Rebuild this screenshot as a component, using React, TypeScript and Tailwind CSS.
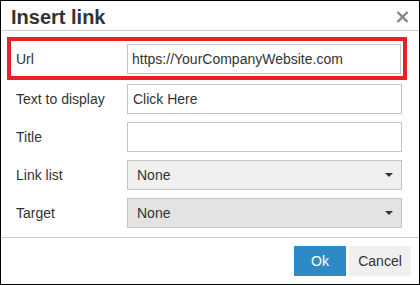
import React from "react";

const font = { fontFamily: '"Liberation Sans", Arial, sans-serif' };

function Arrow() {
  return (
    <svg width="8" height="4" viewBox="0 0 8 4" className="shrink-0">
      <path d="M0 0 L8 0 L4 4 Z" fill="#333333" />
    </svg>
  );
}

export default function App() {
  return (
    <div
      className="w-[420px] h-[285px] border border-black bg-white flex flex-col text-[#333333] overflow-hidden"
      style={font}
    >
      {/* Header */}
      <div className="h-[30px] shrink-0 border-b border-[#cccccc] flex items-center justify-between pl-[10px] pr-[10px]">
        <span className="text-[20px] font-bold leading-none pt-[2px] text-[#333333]">Insert link</span>
        <svg width="13" height="12" viewBox="0 0 13 12" className="mt-[2px]">
          <path d="M1.5 1 L11.5 11 M11.5 1 L1.5 11" stroke="#858585" strokeWidth="2.4" />
        </svg>
      </div>

      {/* Body */}
      <div className="flex-1 flex flex-col pl-[6px] pr-[12px] pt-[6px]">
        <div className="h-[43px] border-[4px] border-[#e8202a] flex items-center pl-[5px] pr-[2px] pt-[1px]">
          <span className="w-[111px] shrink-0 text-[14px]">Url</span>
          <div className="flex-1 h-[30px] border border-[#c5c5c5] bg-white flex items-center pl-[4px] text-[14px]">
            https://YourCompanyWebsite.com
          </div>
        </div>

        <div className="flex flex-col gap-[8px] mt-[4px] pl-[9px] pr-[5px]">
          <div className="flex items-center h-[30px]">
            <span className="w-[111px] shrink-0 text-[14px]">Text to display</span>
            <div className="flex-1 h-[30px] border border-[#c5c5c5] bg-white flex items-center pl-[5px] text-[14px]">
              Click Here
            </div>
          </div>
          <div className="flex items-center h-[30px]">
            <span className="w-[111px] shrink-0 text-[14px]">Title</span>
            <div className="flex-1 h-[30px] border border-[#c5c5c5] bg-white" />
          </div>
          <div className="flex items-center h-[30px]">
            <span className="w-[111px] shrink-0 text-[14px]">Link list</span>
            <div className="flex-1 h-[30px] border border-[#c5c5c5] bg-[#f0f0f0] flex items-center justify-between pl-[9px] pr-[8px] text-[14px]">
              <span>None</span>
              <Arrow />
            </div>
          </div>
          <div className="flex items-center h-[30px]">
            <span className="w-[111px] shrink-0 text-[14px]">Target</span>
            <div className="flex-1 h-[30px] border border-[#c5c5c5] bg-[#e3e3e3] flex items-center justify-between pl-[9px] pr-[8px] text-[14px]">
              <span>None</span>
              <Arrow />
            </div>
          </div>
        </div>
      </div>

      {/* Footer */}
      <div className="h-[47px] shrink-0 border-t border-[#cccccc] flex items-center justify-end gap-[3px] pr-[8px]">
        <button className="w-[52px] h-[30px] bg-[#2d8ac7] text-white text-[14px] flex items-center justify-center">
          Ok
        </button>
        <button className="w-[62px] h-[30px] bg-[#f0f0f0] text-[#333333] text-[14px] flex items-center justify-center">
          Cancel
        </button>
      </div>
    </div>
  );
}
